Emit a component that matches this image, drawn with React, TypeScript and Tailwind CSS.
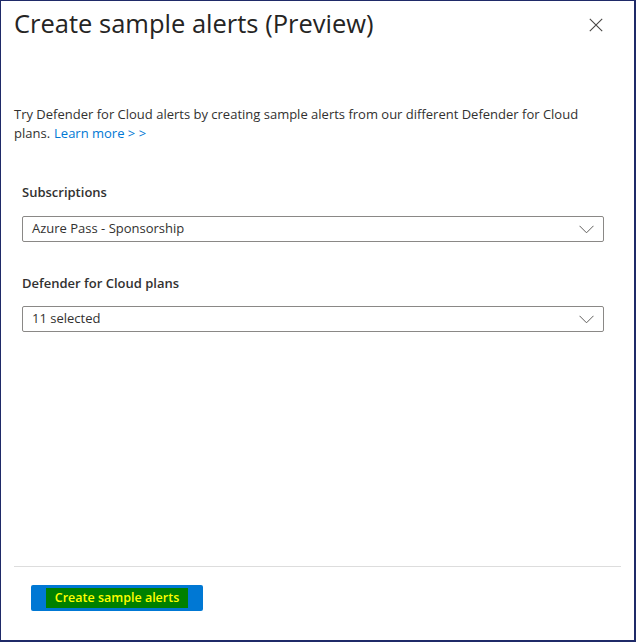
function Chevron() {
  return (
    <svg width="15" height="9" viewBox="0 0 15 9" fill="none" className="text-[#605e5c]">
      <path d="M0.5 0.8 L7.5 7.8 L14.5 0.8" stroke="currentColor" strokeWidth="1" />
    </svg>
  );
}

function CloseIcon() {
  return (
    <svg width="14" height="14" viewBox="0 0 14 14" fill="none" className="text-[#484644]">
      <path d="M0.8 0.8 L13.2 13.2 M13.2 0.8 L0.8 13.2" stroke="currentColor" strokeWidth="1.1" />
    </svg>
  );
}

function Dropdown({ value }: { value: string }) {
  return (
    <div className="flex h-[26px] items-center justify-between rounded-[2px] border border-[#8a8886] bg-white pl-[9px] pr-[9px] text-[13px] text-[#323130]">
      <span>{value}</span>
      <Chevron />
    </div>
  );
}

export default function App() {
  return (
    <div
      className="flex h-[642px] w-[636px] flex-col border-t border-l border-r-2 border-b-2 border-[#1f2a68] bg-white text-[#323130]"
      style={{ fontFamily: '"Open Sans", "Noto Sans", sans-serif' }}
    >
      <header className="flex items-start justify-between pl-[13px] pr-[31px] pt-[4px]">
        <h1 className="text-[25.5px] leading-[36px] font-normal text-[#252423]">Create sample alerts (Preview)</h1>
        <button className="mt-[13px]">
          <CloseIcon />
        </button>
      </header>

      <main className="flex-1 px-[13px]">
        <div className="mt-[64px] text-[13px] leading-[19px]">
          <p>Try Defender for Cloud alerts by creating sample alerts from our different Defender for Cloud</p>
          <p className="flex gap-[4px]">
            <span>plans.</span>
            <a className="text-[#0078d4]" href="#">
              Learn more &gt; &gt;
            </a>
          </p>
        </div>

        <div className="mt-[40px] pl-[8px] pr-[17px]">
          <label className="block text-[13px] font-semibold leading-[18px]">Subscriptions</label>
          <div className="mt-[15px]">
            <Dropdown value="Azure Pass - Sponsorship" />
          </div>

          <label className="mt-[32px] block text-[13px] font-semibold leading-[18px]">Defender for Cloud plans</label>
          <div className="mt-[14px]">
            <Dropdown value="11 selected" />
          </div>
        </div>
      </main>

      <footer className="px-[13px] pb-[29px]">
        <div className="border-t border-[#dddddd]" />
        <div className="mt-[18px] pl-[17px]">
          <button className="flex h-[26px] w-[172px] items-center justify-center rounded-[2px] bg-[#0078d4]">
            <span className="bg-[#008000] px-[9px] text-[12.5px] font-semibold leading-[20px] text-[#ffff00]">
              Create sample alerts
            </span>
          </button>
        </div>
      </footer>
    </div>
  );
}
